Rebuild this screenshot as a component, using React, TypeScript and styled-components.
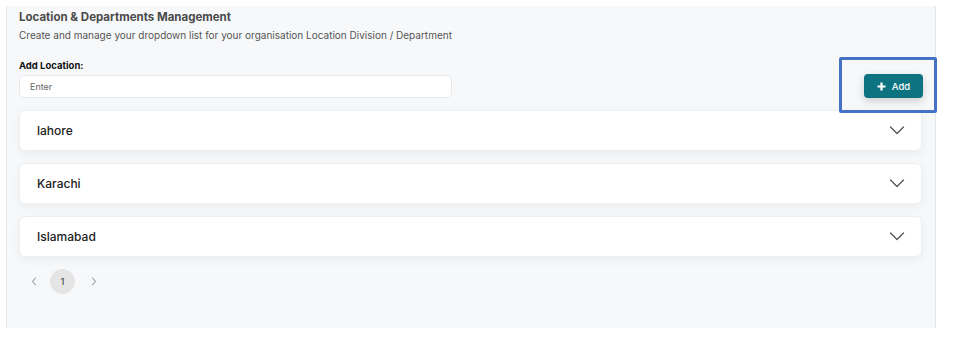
import React from 'react';
import styled, { createGlobalStyle } from 'styled-components';

const locations = ['lahore', 'Karachi', 'Islamabad'];

const GlobalStyle = createGlobalStyle`
  body {
    margin: 0;
    background: #ffffff;
    font-family: Inter, 'Open Sans', sans-serif;
  }
`;

const Chevron: React.FC<{ dir: 'down' | 'left' | 'right' }> = ({ dir }) => {
  if (dir === 'down') {
    return (
      <svg width="16" height="9" viewBox="0 0 16 9" fill="none">
        <path d="M1.5 1 L8 7.5 L14.5 1" stroke="#555" strokeWidth="1.3" strokeLinecap="round" strokeLinejoin="round" />
      </svg>
    );
  }
  return (
    <svg width="6" height="9" viewBox="0 0 6 9" fill="none">
      <path
        d={dir === 'left' ? 'M4.5 1 L1.5 4.5 L4.5 8' : 'M1.5 1 L4.5 4.5 L1.5 8'}
        stroke="#9a9a9a"
        strokeWidth="1.1"
        strokeLinecap="round"
        strokeLinejoin="round"
      />
    </svg>
  );
};

export default function App() {
  return (
    <>
      <GlobalStyle />
      <Panel>
        <Title>Location &amp; Departments Management</Title>
        <Subtitle>Create and manage your dropdown list for your organisation Location Division / Department</Subtitle>

        <FormRow>
          <Field>
            <Label>Add Location:</Label>
            <Input placeholder="Enter" />
          </Field>
          <ButtonWrap>
            <Highlight />
            <AddButton>
              <svg width="9" height="9" viewBox="0 0 9 9">
                <path d="M4.5 0.5 V8.5 M0.5 4.5 H8.5" stroke="#fff" strokeWidth="2.2" />
              </svg>
              Add
            </AddButton>
          </ButtonWrap>
        </FormRow>

        <List>
          {locations.map((name) => (
            <Card key={name}>
              <CardName>{name}</CardName>
              <Chevron dir="down" />
            </Card>
          ))}
        </List>

        <Pager>
          <PagerArrow><Chevron dir="left" /></PagerArrow>
          <PageDot>1</PageDot>
          <PagerArrow><Chevron dir="right" /></PagerArrow>
        </Pager>
      </Panel>
    </>
  );
}

const Panel = styled.div`
  margin: 6px 0 0 6px;
  width: 930px;
  height: 322px;
  box-sizing: border-box;
  background: #f7f8fa;
  border-left: 1px solid #e4e5e8;
  border-right: 1px solid #e4e5e8;
  padding: 4px 13px 0 12px;
`;

const Title = styled.div`
  font-size: 11.5px;
  font-weight: 700;
  color: #4a4a4a;
  line-height: 14px;
`;

const Subtitle = styled.div`
  margin-top: 5px;
  font-size: 10px;
  color: #555;
  line-height: 13px;
`;

const FormRow = styled.div`
  display: flex;
  justify-content: space-between;
  align-items: flex-end;
  margin-top: 18px;
  margin-right: -1px;
`;

const Field = styled.div`
  display: flex;
  flex-direction: column;
  gap: 3px;
`;

const Label = styled.div`
  font-size: 9.5px;
  font-weight: 700;
  color: #111;
  line-height: 12px;
`;

const Input = styled.input`
  width: 433px;
  height: 23px;
  box-sizing: border-box;
  border: 1px solid #e8e9ec;
  border-radius: 5px;
  background: #fff;
  padding: 0 10px;
  font-family: inherit;
  font-size: 9px;
  outline: none;

  &::placeholder {
    color: #666;
  }
`;

const ButtonWrap = styled.div`
  position: relative;
`;

const Highlight = styled.div`
  position: absolute;
  left: -25px;
  top: -17px;
  width: 98px;
  height: 56px;
  box-sizing: border-box;
  border: 3px solid #4472c4;
  border-radius: 2px;
  pointer-events: none;
`;

const AddButton = styled.button`
  display: flex;
  align-items: center;
  justify-content: center;
  gap: 6px;
  width: 59px;
  height: 24px;
  border: none;
  border-radius: 4px;
  background: #0e7380;
  color: #fff;
  font-family: inherit;
  font-size: 9.5px;
  font-weight: 500;
  box-shadow: 0 3px 8px rgba(0, 0, 0, 0.18);
  cursor: pointer;
`;

const List = styled.div`
  display: flex;
  flex-direction: column;
  gap: 12px;
  margin-top: 12px;
`;

const Card = styled.div`
  display: flex;
  align-items: center;
  justify-content: space-between;
  height: 41px;
  box-sizing: border-box;
  padding: 0 16px 0 17px;
  background: #fff;
  border-radius: 6px;
  border: 1px solid #eeeff2;
  box-shadow: 0 3px 10px rgba(0, 0, 0, 0.05);
`;

const CardName = styled.span`
  font-size: 12px;
  font-weight: 500;
  color: #222;
`;

const Pager = styled.div`
  display: flex;
  align-items: center;
  gap: 12px;
  margin-top: 12px;
  padding-left: 12px;

  & > :first-child {
    margin-right: 1px;
  }
  & > :last-child {
    margin-left: 4px;
  }
`;

const PagerArrow = styled.span`
  display: flex;
  align-items: center;
  width: 6px;
`;

const PageDot = styled.span`
  display: flex;
  align-items: center;
  justify-content: center;
  width: 25px;
  height: 25px;
  border-radius: 50%;
  background: #e5e5e5;
  font-size: 9.5px;
  color: #333;
`;
